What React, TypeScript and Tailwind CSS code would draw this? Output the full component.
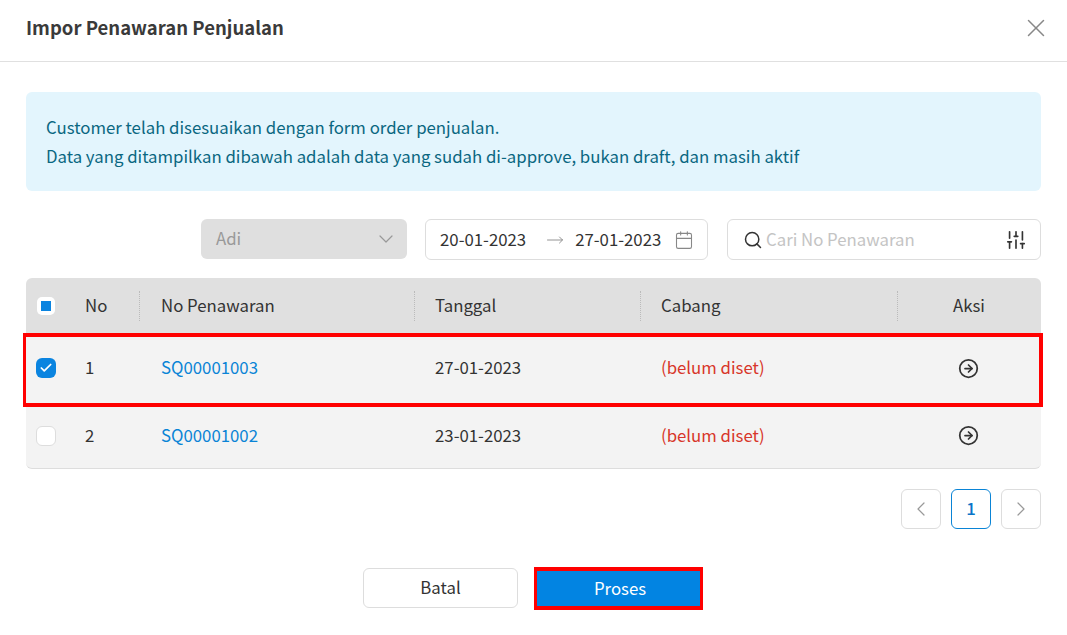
import { Calendar, ChevronDown, ChevronLeft, ChevronRight, CircleArrowRight, Search, SlidersVertical, X, Check, MoveRight } from "lucide-react"

const rows = [
  { no: 1, code: "SQ00001003", date: "27-01-2023", checked: true },
  { no: 2, code: "SQ00001002", date: "23-01-2023", checked: false },
]

export default function App() {
  return (
    <div className="w-[1067px] h-[635px] bg-white overflow-hidden text-[#333] text-[16.8px] font-['Noto_Sans_CJK_JP',sans-serif]">
      <div className="h-[62px] border-b border-[#e0e0e0] pl-[26px] pr-[16px] flex items-center justify-between">
        <h1 className="text-[18.5px] font-semibold -mt-[5px] text-[#3a3a3a]">Impor Penawaran Penjualan</h1>
        <X className="text-[#888] -mt-[5px]" size={30} strokeWidth={1.2} />
      </div>
      <div className="px-[26px] pt-[30px]">
        <div className="h-[99px] rounded-md bg-[#e3f5fd] text-[#0a6781] px-5 flex flex-col justify-center gap-[7px] leading-[22px]">
          <p>Customer telah disesuaikan dengan form order penjualan.</p>
          <p>Data yang ditampilkan dibawah adalah data yang sudah di-approve, bukan draft, dan masih aktif</p>
        </div>
        <div className="flex justify-end mt-[28px]">
          <div className="w-[206px] h-[40px] bg-[#dfdfdf] rounded-md flex items-center justify-between pl-[15px] pr-[9px] text-[#999]">
            Adi <ChevronDown size={24} strokeWidth={1.2} />
          </div>
          <div className="w-[283px] h-[41px] ml-[18px] border border-[#ddd] rounded-md flex items-center pl-[14px] pr-[13px]">
            <span>20-01-2023</span>
            <MoveRight className="ml-[20px] mr-[11px] text-[#888]" size={18} strokeWidth={1.2} />
            <span>27-01-2023</span>
            <Calendar className="ml-auto text-[#888]" size={20} strokeWidth={1.3} />
          </div>
          <div className="w-[314px] h-[41px] ml-[19px] border border-[#ddd] rounded-md flex items-center pl-[15px] pr-[13px]">
            <Search size={20} strokeWidth={1.8} className="text-[#333]" />
            <span className="ml-[3px] text-[#c4c4c4]">Cari No Penawaran</span>
            <SlidersVertical className="ml-auto" size={22} strokeWidth={1.8} />
          </div>
        </div>
        <div className="mt-[18px] relative">
          <div className="h-[56px] bg-[#e0e0e0] rounded-t-md flex items-center">
            <div className="w-[113px] flex items-center">
              <div className="w-[40px] flex justify-center">
                <span className="w-[18px] h-[18px] bg-white rounded-[5px] flex items-center justify-center">
                  <span className="w-[10px] h-[10px] bg-[#0a84e0]" />
                </span>
              </div>
              <span className="ml-[19px]">No</span>
            </div>
            <div className="w-[275px] h-[30px] border-l border-dotted border-[#bbb] pl-[21px] flex items-center">No Penawaran</div>
            <div className="w-[226px] h-[30px] border-l border-dotted border-[#bbb] pl-[20px] flex items-center">Tanggal</div>
            <div className="w-[257px] h-[30px] border-l border-dotted border-[#bbb] pl-[20px] flex items-center">Cabang</div>
            <div className="flex-1 h-[30px] border-l border-dotted border-[#bbb] flex items-center justify-center pr-[1px]">Aksi</div>
          </div>
          {rows.map((r) => (
            <div key={r.no} className={`bg-[#f3f3f3] flex items-center ${r.checked ? "h-[68px] relative" : "h-[67px] pt-[1px] rounded-b-md border-b border-[#ddd]"}`}>
              {r.checked && <div className="absolute z-10 -left-[3px] -right-[2px] -top-[1px] -bottom-[5px] border-y-[4px] border-l-[3px] border-r-[4px] border-[#ff0000]" />}
              <div className="w-[113px] flex items-center">
                <div className="w-[40px] flex justify-center">
                  {r.checked ? (
                    <span className="w-[20px] h-[20px] bg-[#0a84e0] rounded-md flex items-center justify-center">
                      <Check size={14} strokeWidth={3} className="text-white" />
                    </span>
                  ) : (
                    <span className="w-[20px] h-[20px] bg-white border border-[#ddd] rounded-md" />
                  )}
                </div>
                <span className="ml-[19px]">{r.no}</span>
              </div>
              <div className="w-[275px] pl-[22px] text-[#0a84d6]">{r.code}</div>
              <div className="w-[226px] pl-[21px]">{r.date}</div>
              <div className="w-[257px] pl-[21px] text-[#d8362a]">(belum diset)</div>
              <div className="flex-1 flex justify-center pr-[1px]">
                <CircleArrowRight size={21} strokeWidth={2} />
              </div>
            </div>
          ))}
        </div>
        <div className="flex justify-end gap-[10px] mt-[20px]">
          <div className="w-[40px] h-[40px] border border-[#ddd] rounded-md flex items-center justify-center text-[#999]">
            <ChevronLeft size={24} strokeWidth={1.2} />
          </div>
          <div className="w-[40px] h-[40px] border border-[#0a84d6] rounded-md flex items-center justify-center text-[#0a74c8] font-medium">1</div>
          <div className="w-[40px] h-[40px] border border-[#ddd] rounded-md flex items-center justify-center text-[#999]">
            <ChevronRight size={24} strokeWidth={1.2} />
          </div>
        </div>
        <div className="flex justify-center items-start gap-[16px] mt-[39px] pr-[1px]">
          <button className="w-[155px] h-[40px] border border-[#ddd] rounded-md bg-white">Batal</button>
          <button className="w-[169px] h-[43px] -mt-[1px] pl-[3px] border-x-[3px] border-y-[4px] border-[#ff0000] bg-[#0284e2] text-white">Proses</button>
        </div>
      </div>
    </div>
  )
}
